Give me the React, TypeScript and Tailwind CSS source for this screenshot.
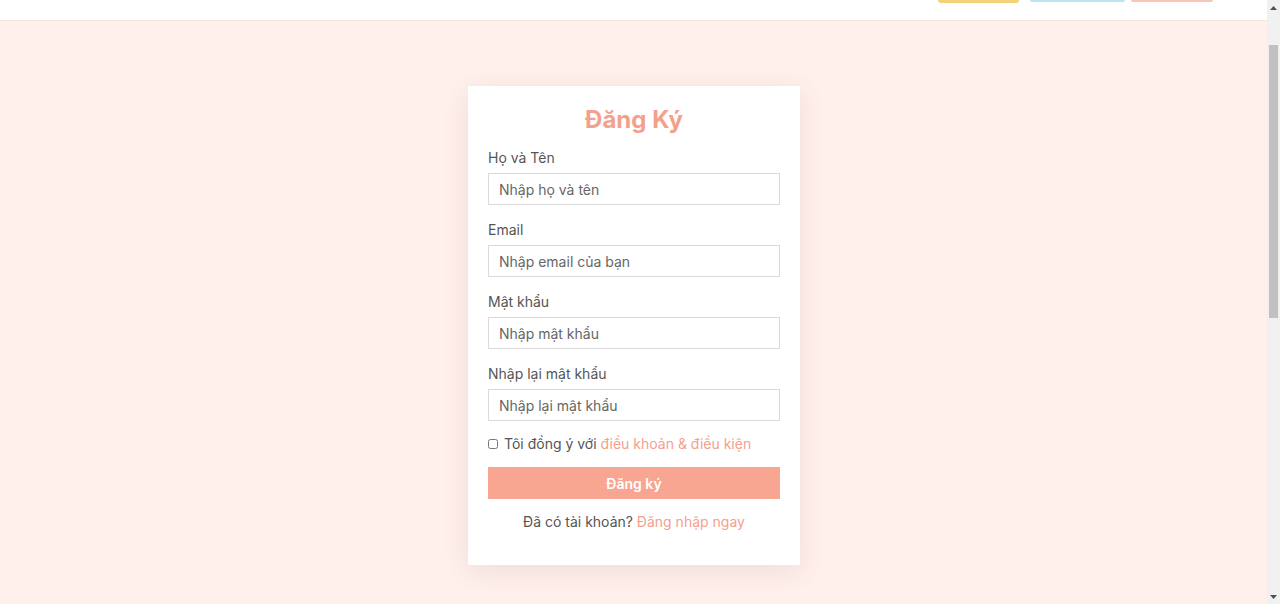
import React from 'react'

type Field = {
  label: string
  placeholder: string
  type: string
}

const fields: Field[] = [
  { label: 'Họ và Tên', placeholder: 'Nhập họ và tên', type: 'text' },
  { label: 'Email', placeholder: 'Nhập email của bạn', type: 'email' },
  { label: 'Mật khẩu', placeholder: 'Nhập mật khẩu', type: 'password' },
  { label: 'Nhập lại mật khẩu', placeholder: 'Nhập lại mật khẩu', type: 'password' },
]

function FakeScrollbar() {
  return (
    <div className="flex w-[13px] shrink-0 flex-col bg-[#f1f1f1]">
      <div className="flex h-[15px] items-center justify-center">
        <svg width="7" height="4" viewBox="0 0 7 4">
          <path d="M0 4 L3.5 0 L7 4 Z" fill="#505050" />
        </svg>
      </div>
      <div className="mx-[2px] mt-[30px] h-[273px] bg-[#c1c1c1]" />
      <div className="flex-1" />
      <div className="flex h-[15px] items-center justify-center">
        <svg width="7" height="4" viewBox="0 0 7 4">
          <path d="M0 0 L3.5 4 L7 0 Z" fill="#505050" />
        </svg>
      </div>
    </div>
  )
}

export default function App() {
  return (
    <div className="flex h-[604px] w-[1280px] overflow-hidden bg-[#fff0ec] font-['Inter',sans-serif] text-[#555]">
      <div className="flex flex-1 flex-col">
        {/* top nav strip */}
        <div className="flex h-[21px] shrink-0 items-start border-b border-[#f3e6e3] bg-white pl-[938px]">
          <div className="h-[3px] w-[81px] rounded-b-sm bg-[#f3d27c]" />
          <div className="ml-[11px] h-[2px] w-[95px] rounded-b-sm bg-[#bfe3f0]" />
          <div className="ml-[6px] h-[2px] w-[82px] rounded-b-sm bg-[#f8c4b6]" />
        </div>

        <div className="flex flex-1 justify-center pl-[1px] pt-[65px]">
          <form className="flex h-[479px] w-[332px] flex-col bg-white px-[20px] pt-[16px] shadow-[0_6px_24px_rgba(120,80,70,0.12)]">
            <h1 className="mb-[9px] text-center text-[24px] leading-[36px] font-bold text-[#f4a08d]">
              Đăng Ký
            </h1>

            {fields.map((f) => (
              <div key={f.label} className="mb-[14px] flex flex-col">
                <label className="mb-[5px] text-[14px] leading-[21px] text-[#555]">{f.label}</label>
                <input
                  type={f.type === 'password' ? 'text' : f.type}
                  placeholder={f.placeholder}
                  className="h-[32px] border border-[#d9d9d9] px-[10px] text-[14px] text-[#555] outline-none placeholder:text-[#666]"
                />
              </div>
            ))}

            <div className="mt-[-2px] flex items-center gap-[6px] text-[14px] leading-[21px]">
              <input type="checkbox" className="h-[10px] w-[10px]" />
              <span className="text-[#555]">
                Tôi đồng ý với <a className="text-[#f4a08d]">điều khoản &amp; điều kiện</a>
              </span>
            </div>

            <button
              type="button"
              className="mt-[13px] h-[32px] bg-[#f8a591] text-[14px] font-semibold text-white"
            >
              Đăng ký
            </button>

            <p className="mt-[12px] text-center text-[14px] leading-[21px] text-[#555]">
              Đã có tài khoản? <a className="text-[#f4a08d]">Đăng nhập ngay</a>
            </p>
          </form>
        </div>
      </div>
      <FakeScrollbar />
    </div>
  )
}
